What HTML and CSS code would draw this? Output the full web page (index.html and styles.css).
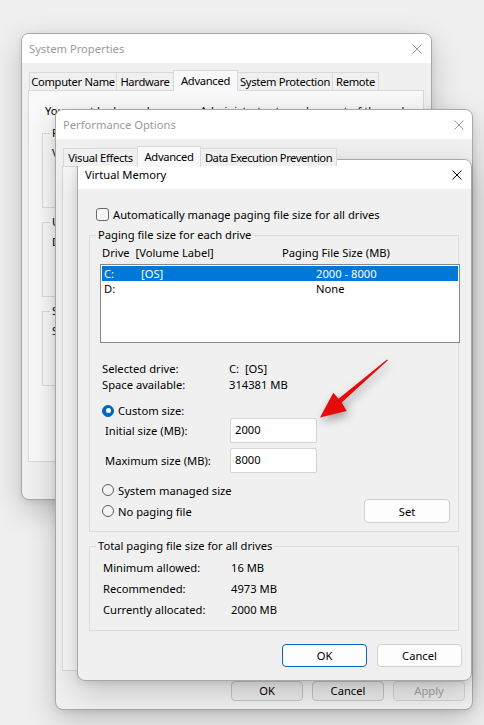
FILE: index.html
```html
<!DOCTYPE html>
<html lang="en">
<head>
<meta charset="utf-8">
<title>Virtual Memory</title>
<link rel="stylesheet" href="styles.css">
</head>
<body>
<div class="desktop">

  <section class="win win-sys">
    <header class="titlebar inactive">
      <span class="title">System Properties</span>
      <span class="close close-sys"><svg viewBox="0 0 10 10"><path d="M0.5 0.5L9.5 9.5M9.5 0.5L0.5 9.5"/></svg></span>
    </header>
    <div class="wbody">
      <div class="tabs">
        <span class="tab t-cn">Computer Name</span>
        <span class="tab t-hw">Hardware</span>
        <span class="tab sel t-adv">Advanced</span>
        <span class="tab t-sp">System Protection</span>
        <span class="tab t-rm">Remote</span>
      </div>
      <div class="panel panel-sys">
        <p class="intro">You must be logged on as an Administrator to make most of these changes.</p>
        <fieldset class="sgrp">
          <legend>Performance</legend>
          <p>Visual effects, processor scheduling, memory usage and virtual memory</p>
          <div class="sbtn-row"><button class="btn btn-bg">Settings...</button></div>
        </fieldset>
        <fieldset class="sgrp">
          <legend>User Profiles</legend>
          <p>Desktop settings related to your sign-in</p>
          <div class="sbtn-row"><button class="btn btn-bg">Settings...</button></div>
        </fieldset>
        <fieldset class="sgrp">
          <legend>Startup and Recovery</legend>
          <p>System startup, system failure, and debugging information</p>
          <div class="sbtn-row"><button class="btn btn-bg">Settings...</button></div>
        </fieldset>
      </div>
    </div>
  </section>

  <section class="win win-perf">
    <header class="titlebar inactive">
      <span class="title">Performance Options</span>
      <span class="close close-perf"><svg viewBox="0 0 10 10"><path d="M0.5 0.5L9.5 9.5M9.5 0.5L0.5 9.5"/></svg></span>
    </header>
    <div class="wbody">
      <div class="tabs tabs-perf">
        <span class="tab t-ve">Visual Effects</span>
        <span class="tab sel t-adv2">Advanced</span>
        <span class="tab t-dep">Data Execution Prevention</span>
      </div>
      <div class="panel panel-perf"></div>
      <div class="perf-buttons">
        <button class="btn btn-bg2">OK</button>
        <button class="btn btn-bg2">Cancel</button>
        <button class="btn btn-bg2 disabled">Apply</button>
      </div>
    </div>
  </section>

  <section class="win win-vm">
    <header class="titlebar">
      <span class="title">Virtual Memory</span>
      <span class="close close-vm"><svg viewBox="0 0 10 10"><path d="M0.5 0.5L9.5 9.5M9.5 0.5L0.5 9.5"/></svg></span>
    </header>
    <div class="wbody vm-body">
      <div class="check-row"><span class="checkbox"></span><span>Automatically manage paging file size for all drives</span></div>

      <fieldset class="grp grp-drive">
        <legend>Paging file size for each drive</legend>
        <div class="lb-head"><span>Drive  [Volume Label]</span><span>Paging File Size (MB)</span></div>
        <div class="listbox">
          <div class="lb-row sel"><span>C:</span><span>[OS]</span><span>2000 - 8000</span></div>
          <div class="lb-row"><span>D:</span><span></span><span>None</span></div>
        </div>
        <div class="info">
          <div class="kv"><span>Selected drive:</span><span>C:  [OS]</span></div>
          <div class="kv"><span>Space available:</span><span>314381 MB</span></div>
        </div>
        <div class="radio-row r-custom"><span class="radio on"></span><span>Custom size:</span></div>
        <div class="field-row f-initial"><span class="flabel">Initial size (MB):</span><span class="input">2000</span></div>
        <div class="field-row f-max"><span class="flabel">Maximum size (MB):</span><span class="input">8000</span></div>
        <div class="radio-row r-system"><span class="radio"></span><span>System managed size</span></div>
        <div class="radio-row r-none"><span class="radio"></span><span>No paging file</span><button class="btn btn-set">Set</button></div>
      </fieldset>

      <fieldset class="grp grp-total">
        <legend>Total paging file size for all drives</legend>
        <div class="kv2"><span>Minimum allowed:</span><span>16 MB</span></div>
        <div class="kv2"><span>Recommended:</span><span>4973 MB</span></div>
        <div class="kv2"><span>Currently allocated:</span><span>2000 MB</span></div>
      </fieldset>

      <div class="dlg-buttons">
        <button class="btn btn-dlg default">OK</button>
        <button class="btn btn-dlg">Cancel</button>
      </div>
    </div>
  </section>

  <svg class="arrow" viewBox="0 0 484 725" width="484" height="725">
    <polygon points="387,359.4 338.5,398.7 333.3,392.7 320,417.5 346.7,411 341.7,402.5 387.7,360.4"/>
  </svg>
</div>
</body>
</html>
```

FILE: styles.css
```css
* { box-sizing: border-box; }
html, body { margin: 0; padding: 0; }
body {
  width: 484px; height: 725px; overflow: hidden;
  background: #efefef;
  font-family: "Noto Sans", "Open Sans", sans-serif;
  font-size: 11.2px; color: #000;
}
p { margin: 0; }
.desktop { position: relative; width: 484px; height: 725px; background: #efefef; }

.win {
  position: absolute; display: flex; flex-direction: column;
  border: 1px solid #a8a8a8; border-radius: 8px; background: #f0f0f0; overflow: hidden;
  box-shadow: 0 10px 30px rgba(0,0,0,0.20), 0 2px 6px rgba(0,0,0,0.08);
}
.win-sys { left: 21px; top: 33px; width: 411px; height: 467px; }
.win-perf { left: 55px; top: 109px; width: 418px; height: 601px; }
.win-vm { left: 77px; top: 159px; width: 395px; height: 522px; }

.titlebar { height: 29px; flex: none; display: flex; align-items: center; background: #fff; }
.title { padding-left: 7px; line-height: 29px; }
.titlebar.inactive .title { color: #9a9a9a; }
.close { margin-left: auto; height: 29px; display: flex; align-items: center; justify-content: center; }
.close svg { width: 10px; height: 10px; }
.close path { stroke: #000; stroke-width: 1; fill: none; }
.titlebar.inactive .close path { stroke: #9a9a9a; }
.close-sys { width: 29px; }
.close-perf { width: 27px; }
.close-vm { width: 28px; }

.wbody { flex: 1; display: flex; flex-direction: column; }

.tabs { display: flex; align-items: flex-end; height: 18px; margin: 9px 0 0 7px; position: relative; z-index: 1; }
.tab {
  height: 18px; border: 1px solid #d9d9d9; border-bottom: none; margin-right: -1px;
  background: #f0f0f0; text-align: center; line-height: 17px; white-space: nowrap;
  letter-spacing: -0.3px;
}
.tab.sel { height: 21px; margin-bottom: -1px; background: #f9f9f9; line-height: 19px; }
.t-cn { width: 88px; } .t-hw { width: 58px; } .t-adv { width: 65px; } .t-sp { width: 96px; } .t-rm { width: 47px; }
.t-ve { width: 75px; } .t-adv2 { width: 64px; } .t-dep { width: 137px; letter-spacing: -0.45px; }

.panel { border: 1px solid #d9d9d9; background: #f9f9f9; }
.panel-sys { margin: 0 7px 0 6px; height: 372px; padding: 12px 0 0 0; }
.intro { padding-left: 16px; line-height: 16px; white-space: nowrap; }
.sgrp {
  margin: 6px 13px 0 13px; padding: 0 0 0 7px; border: 1px solid #dcdcdc; min-inline-size: 0;
}
.sgrp + .sgrp { margin-top: 6px; }
.sgrp legend { padding: 0 2px; line-height: 16px; }
.sgrp p { margin-top: 4px; padding-left: 2px; line-height: 16px; white-space: nowrap; }
.sbtn-row { display: flex; justify-content: flex-end; margin: 12px 8px 11px 0; }

.panel-perf { margin: 0 6px 0 6px; height: 505px; }
.perf-buttons { display: flex; justify-content: flex-end; gap: 9px; margin: 10px 7px 0 0; }

.btn {
  font: inherit; color: #000; margin: 0; padding: 0;
  background: #fdfdfd; border: 1px solid #d0d0d0; border-radius: 4px;
}
.btn-bg { width: 75px; height: 23px; background: #f6f6f6; }
.btn-bg2 { width: 72px; height: 20px; background: #ebebeb; border-color: #c4c4c4; line-height: 18px; }
.btn-bg2.disabled { color: #a2a2a2; border-color: #d2d2d2; }

/* Virtual memory dialog */
.vm-body { padding: 17px 12px 0 11px; }
.check-row { display: flex; align-items: center; height: 16px; margin-left: 7px; white-space: nowrap; }
.checkbox {
  width: 13px; height: 13px; border: 1px solid #6a6a6a; border-radius: 3px;
  background: #f6f6f6; margin-right: 4px; flex: none;
}

.grp { margin: 0; padding: 0 0 8px 6px; border: 1px solid #dcdcdc; min-inline-size: 0; }
.grp legend { padding: 0 2px; line-height: 16px; white-space: nowrap; }
.grp > :not(legend) { margin-left: 4px; }
.grp-drive { margin-top: 5px; }
.grp-total { margin-top: 6px; padding-bottom: 10px; }

.lb-head { display: grid; grid-template-columns: 180px auto; margin-top: 2px; padding-left: 2px; line-height: 16px; white-space: pre; }
.listbox {
  margin-top: 3px; margin-right: -2px; height: 79px; padding: 1px;
  border: 1px solid #828790; background: #fff;
}
.lb-row { display: grid; grid-template-columns: 37px 175px auto; height: 15px; line-height: 15px; padding-left: 2px; white-space: pre; }
.lb-row.sel { background: #0078d7; color: #fff; }

.info { margin-top: 18px; padding-left: 2px; }
.kv { display: grid; grid-template-columns: 127px auto; line-height: 16px; white-space: pre; }

.radio-row { display: flex; align-items: center; padding-left: 2px; white-space: nowrap; }
.radio {
  width: 12px; height: 12px; border-radius: 50%; border: 1px solid #5f5f5f; background: #f4f4f4;
  margin-right: 4px; flex: none; display: flex; align-items: center; justify-content: center;
}
.radio.on { background: #0067c0; border-color: #0067c0; }
.radio.on::after { content: ""; width: 5px; height: 5px; border-radius: 50%; background: #fff; }
.r-custom { margin-top: 10px; height: 15px; }
.r-system { margin-top: 9px; height: 16px; }
.r-none { margin-top: 1px; height: 24px; }

.field-row { display: flex; align-items: center; height: 25px; padding-left: 5px; }
.flabel { width: 125px; white-space: nowrap; }
.f-max { margin-top: 5px; }
.input {
  width: 87px; height: 25px; border: 1px solid #d4d4d4; border-radius: 2px; background: #fff;
  padding-left: 4px; line-height: 21px;
}

.btn-set { margin-left: auto; margin-right: 8px; width: 86px; height: 24px; }

.kv2 { display: grid; grid-template-columns: 128px auto; line-height: 21px; padding-left: 3px; white-space: nowrap; }
.kv2:first-of-type { margin-top: 3px; }

.dlg-buttons { display: flex; justify-content: flex-end; gap: 10px; margin: 13px -3px 0 0; }
.btn-dlg { width: 85px; height: 23px; }
.btn-dlg.default { border-color: #0067c0; }

.arrow { position: absolute; left: 0; top: 0; pointer-events: none; filter: drop-shadow(2px 4px 5px rgba(0,0,0,0.35)); }
.arrow polygon { fill: #e50b0b; }
```
